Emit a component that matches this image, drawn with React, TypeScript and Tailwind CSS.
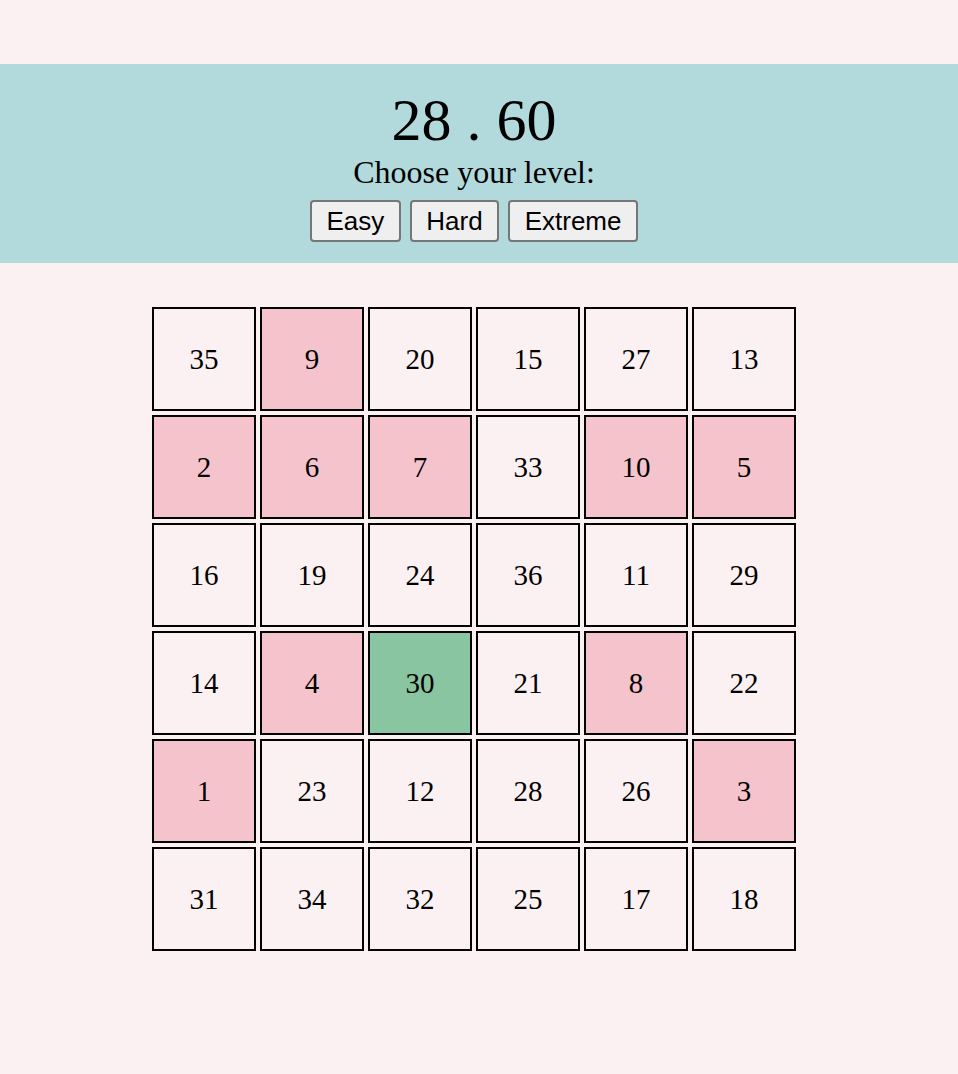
const rows = [
  [35, 9, 20, 15, 27, 13],
  [2, 6, 7, 33, 10, 5],
  [16, 19, 24, 36, 11, 29],
  [14, 4, 30, 21, 8, 22],
  [1, 23, 12, 28, 26, 3],
  [31, 34, 32, 25, 17, 18],
];

function Tile({ n }: { n: number }) {
  var bg = "bg-[#fcf1f2]";
  if (n == 30) bg = "bg-[#88c5a0]";
  else if (n <= 10) bg = "bg-[#f5c3cc]";

  return (
    <div
      className={`${bg} w-[104px] h-[104px] border-2 border-black flex items-center justify-center pt-[2px] text-[29px] text-black`}
    >
      {n}
    </div>
  );
}

export default function App() {
  return (
    <div
      className="min-h-[1074px] bg-[#fcf1f2] pt-16"
      style={{ fontFamily: '"Liberation Serif", "Times New Roman", serif' }}
    >
      <div className="bg-[#b2dadc] h-[199px] flex flex-col items-center pt-[22px] pr-[10px]">
        <div className="text-[60px] leading-[68px] text-black">28 . 60</div>
        <div className="text-[32px] leading-[36px] text-black">Choose your level:</div>
        <div
          className="flex gap-[9px] mt-[10px]"
          style={{ fontFamily: '"Liberation Sans", Arial, sans-serif' }}
        >
          {["Easy", "Hard", "Extreme"].map((label) => (
            <button
              key={label}
              className="h-[42px] px-[14.5px] text-[26px] bg-[#efefef] border-2 border-[#767676] rounded-[4px] text-black"
            >
              {label}
            </button>
          ))}
        </div>
      </div>

      <div className="ml-[152px] mt-[44px] grid grid-cols-[repeat(6,104px)] gap-[4px]">
        {rows.flat().map((n) => (
          <Tile key={n} n={n} />
        ))}
      </div>
    </div>
  );
}
